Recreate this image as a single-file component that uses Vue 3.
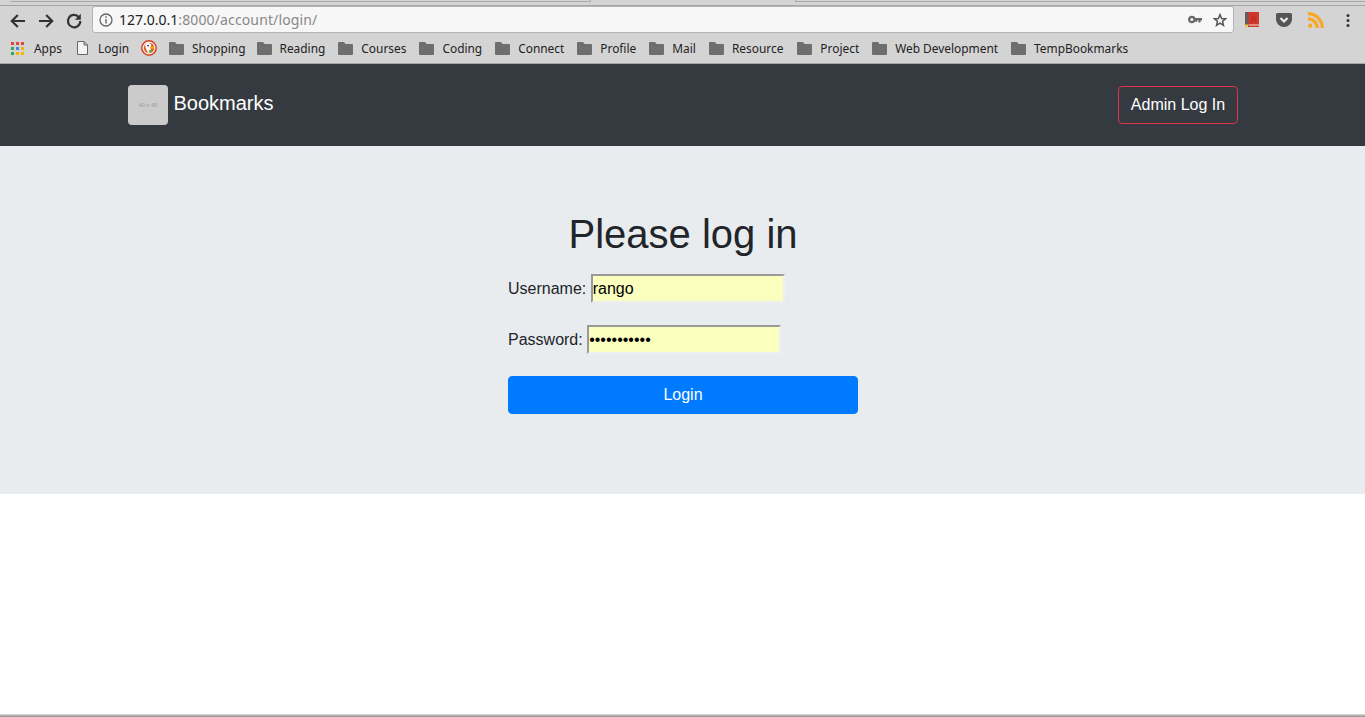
<script setup>
const grid = []
const cols = ['#e8453c','#e8453c','#e8453c','#34a853','#4285f4','#f4b400','#34a853','#f4b400','#f4b400']
for (let r = 0; r < 3; r++) for (let c = 0; c < 3; c++) grid.push({ x: c * 5, y: r * 5, f: cols[r * 3 + c] })
const folders = ['Shopping','Reading','Courses','Coding','Connect','Profile','Mail','Resource','Project','Web Development','TempBookmarks']
</script>

<template>
  <div class="page">
    <header class="chrome">
      <div class="tabs">
        <span class="tab tab-a"></span>
        <span class="tab tab-b"></span>
      </div>
      <div class="toolbar">
        <svg class="nav" width="18" height="18" viewBox="0 0 18 18"><path d="M16 9H3.500M8.800 3 2.800 9 8.800 15" fill="none" stroke="#333" stroke-width="2.200"/></svg>
        <svg class="nav" width="18" height="18" viewBox="0 0 18 18"><path d="M2 9h12.500M9.200 3 15.200 9 9.200 15" fill="none" stroke="#333" stroke-width="2.200"/></svg>
        <svg class="nav" width="18" height="18" viewBox="0 0 18 18"><path d="M14 5.300A6.200 6.200 0 1 0 15.300 9" fill="none" stroke="#333" stroke-width="2.200"/><path d="M15.800 1.800V7.800H9.800Z" fill="#333"/></svg>
        <div class="omnibox">
          <svg width="14" height="14" viewBox="0 0 14 14"><circle cx="7" cy="7" r="6" fill="none" stroke="#666" stroke-width="1.300"/><path d="M6.300 6h1.400v4.500H6.300zM6.300 3.200h1.400v1.500H6.300z" fill="#666"/></svg>
          <span class="url"><span class="host">127.0.0.1</span>:8000/account/login/</span>
          <span class="grow"></span>
          <svg width="14" height="9" viewBox="0 0 14 9"><circle cx="3.800" cy="4.500" r="2.700" fill="none" stroke="#666" stroke-width="2.200"/><path d="M6 3h8v2.500h-1.500V7.500H10.500V5.500H9V7H7.500V5.500H6Z" fill="#666"/></svg>
          <svg class="star" width="14" height="14" viewBox="0 0 16 16"><path d="M8 1.800 9.800 6.200 14.500 6.500 10.900 9.500 12 14.100 8 11.600 4 14.100 5.100 9.500 1.500 6.500 6.200 6.200Z" fill="none" stroke="#555" stroke-width="1.700"/></svg>
        </div>
        <svg class="ext book" width="14" height="15" viewBox="0 0 14 15"><rect width="14" height="15" fill="#d2372c"/><rect width="3.500" height="15" fill="#6b5a58"/><rect x="3.500" y="12.500" width="10.500" height="1" fill="#f3d9d6"/><rect y="12.500" width="3" height="2.500" fill="#f4c430"/><path d="M6 10.500 8.700 3 11.400 10.500M7 8h3.400" fill="none" stroke="#b52a20" stroke-width="1"/></svg>
        <svg class="ext pocket" width="16" height="14" viewBox="0 0 16 14"><path d="M1.500 0h13A1.500 1.500 0 0 1 16 1.500V6.500a8 7.500 0 0 1-16 0V1.500A1.500 1.500 0 0 1 1.500 0Z" fill="#565656"/><path d="M4.500 5 8 8.500 11.500 5" fill="none" stroke="#eee" stroke-width="2.200"/></svg>
        <svg class="ext rss" width="16" height="16" viewBox="0 0 16 16"><circle cx="2.200" cy="13.800" r="2.200" fill="#f9a825"/><path d="M0 6.800a9.200 9.200 0 0 1 9.200 9.200M0 1.700A14.300 14.300 0 0 1 14.300 16" fill="none" stroke="#f9a825" stroke-width="3.200"/></svg>
        <svg class="menu" width="4" height="13" viewBox="0 0 4 13"><circle cx="2" cy="1.500" r="1.500" fill="#333"/><circle cx="2" cy="6.500" r="1.500" fill="#333"/><circle cx="2" cy="11.500" r="1.500" fill="#333"/></svg>
      </div>
      <nav class="bookmarks">
        <a class="bm">
          <svg width="13" height="13" viewBox="0 0 13 13"><rect v-for="(g, i) in grid" :key="i" :x="g.x" :y="g.y" width="3" height="3" :fill="g.f"/></svg>
          <span class="apps-label">Apps</span>
        </a>
        <a class="bm bm-login">
          <svg width="11" height="14" viewBox="0 0 11 14"><path d="M.5.500h6.500l3.500 3.500v9.500H.5ZM7 .5V4h3.500" fill="#f3f3f3" stroke="#666"/></svg>
          <span>Login</span>
        </a>
        <a class="bm bm-duck">
          <svg width="16" height="16" viewBox="0 0 16 16"><circle cx="8" cy="8" r="7.200" fill="#f6f6f6" stroke="#d8401c" stroke-width="1.500"/><circle cx="8" cy="8" r="5.200" fill="#e8592e"/><path d="M4.500 3.800A4.500 4.500 0 0 1 10 4.200L9.800 9 9.500 13H7C6 10.500 3.700 7.500 4.500 3.800Z" fill="#fff"/><path d="M8.500 7 13 6.500 12.500 8.500 9 9Z" fill="#f6b21b"/><path d="M7.500 10.500 11 9.500 10.500 12 8 12.800Z" fill="#5dae3f"/><circle cx="7" cy="5.600" r=".9" fill="#234"/></svg>
        </a>
        <a v-for="f in folders" :key="f" class="bm" :class="{ tight: f === 'Shopping', loose: f === 'Project' }">
          <svg width="15" height="13" viewBox="0 0 15 13"><path d="M1 0h5l1.500 2H14a1 1 0 0 1 1 1v9a1 1 0 0 1-1 1H1a1 1 0 0 1-1-1V1a1 1 0 0 1 1-1Z" fill="#6e6e6e"/></svg>
          <span>{{ f }}</span>
        </a>
      </nav>
    </header>

    <div class="navbar">
      <div class="container">
        <a class="brand">
          <span class="thumb">40 x 40</span>
          <span class="brand-name">Bookmarks</span>
        </a>
        <button class="admin" type="button">Admin Log In</button>
      </div>
    </div>

    <main class="jumbotron">
      <h1>Please log in</h1>
      <form class="login" @submit.prevent>
        <div class="row">
          <label for="u">Username:</label>
          <input id="u" type="text" value="rango" />
        </div>
        <div class="row">
          <label for="p">Password:</label>
          <input id="p" type="password" value="abcdefghijk" />
        </div>
        <button class="submit" type="submit">Login</button>
      </form>
    </main>

    <div class="rest"></div>
    <div class="edge"></div>
  </div>
</template>

<style>
html, body { margin: 0; padding: 0; background: #fff; overflow: hidden; }
</style>

<style scoped>
.page {
  height: 717px;
  display: flex;
  flex-direction: column;
  font-family: "Liberation Sans", Arial, sans-serif;
  color: #212529;
}
.chrome {
  height: 64px;
  box-sizing: border-box;
  background: #d4d4d4;
  border-bottom: 1px solid #a6a6a6;
  position: relative;
  flex: none;
}
.tabs {
  height: 6px;
  box-sizing: border-box;
  border-bottom: 1px solid #a5a5a5;
  position: relative;
}
.tab {
  position: absolute;
  top: 0;
  height: 1px;
  border-bottom: 1px solid #a8a8a8;
}
.tab-a { left: 10px; width: 580px; border-right: 1px solid #a8a8a8; }
.tab-b { left: 795px; right: 0; border-left: 1px solid #a8a8a8; }
.toolbar {
  height: 27px;
  display: flex;
  align-items: center;
  position: relative;
}
.nav { flex: none; margin-left: 10px; margin-top: 2px; }
.nav:first-child { margin-left: 9px; }
.omnibox {
  flex: none;
  margin-left: 9px;
  width: 1142px;
  height: 27px;
  box-sizing: border-box;
  background: #f7f7f7;
  border: 1px solid #b4b4b4;
  border-radius: 3px;
  display: flex;
  align-items: center;
  padding: 0 6px 0 6px;
}
.url {
  font-family: "Noto Sans", sans-serif;
  font-size: 14px;
  color: #888;
  margin-left: 6px;
  letter-spacing: 0.13px;
}
.host { color: #222; letter-spacing: 0; }
.grow { flex: 1; }
.star { margin-left: 11px; }
.ext { flex: none; }
.book { margin-left: 11px; }
.pocket { margin-left: 17px; margin-top: 1px; }
.rss { margin-left: 16px; }
.menu { flex: none; margin-left: 22px; margin-top: 1px; }
.bookmarks {
  position: relative;
  height: 28px;
  box-sizing: border-box;
  padding: 2px 0 0 11px;
  display: flex;
  align-items: center;
  gap: 13px;
  font-family: "Noto Sans", sans-serif;
  font-size: 11.9px;
  color: #222;
}
.bm {
  display: flex;
  align-items: center;
  gap: 8px;
  white-space: nowrap;
  flex: none;
}
.apps-label { margin-left: 2px; }
.bm-login { margin-left: 2px; gap: 10px; }
.bm-duck { margin-left: -1px; margin-right: -1px; }
.tight { margin-right: -2px; }
.loose { margin-left: 1px; }
.navbar {
  flex: none;
  height: 82px;
  background: #343a40;
  display: flex;
  align-items: center;
  padding-left: 1px;
}
.container {
  width: 1110px;
  margin: 0 auto;
  display: flex;
  align-items: center;
  justify-content: space-between;
}
.brand { display: flex; align-items: center; gap: 5.500px; color: #fff; }
.thumb {
  width: 40px;
  height: 40px;
  background: #cbcbcb;
  border-radius: 4px;
  color: #9a9a9a;
  font-size: 5.600px;
  display: flex;
  align-items: center;
  justify-content: center;
}
.brand-name { font-size: 20px; line-height: 30px; position: relative; top: -2px; }
.admin {
  width: 120px;
  height: 38px;
  box-sizing: border-box;
  background: transparent;
  border: 1px solid #dc3545;
  border-radius: 4px;
  color: #fff;
  font: 16px/24px "Liberation Sans", Arial, sans-serif;
  padding: 0;
}
.jumbotron {
  flex: none;
  height: 348px;
  box-sizing: border-box;
  background: #e9ecef;
  padding: 64px 0 0 1px;
}
h1 {
  margin: 0;
  font-size: 40px;
  font-weight: 400;
  line-height: 48px;
  text-align: center;
  color: #212529;
}
.login {
  width: 350px;
  margin: 16px auto 0;
  display: flex;
  flex-direction: column;
  gap: 22px;
}
.row {
  display: flex;
  align-items: center;
  height: 29px;
  gap: 4.450px;
  font-size: 16px;
}
input {
  width: 194px;
  height: 29px;
  box-sizing: border-box;
  border: 2px solid;
  border-color: #9a9a9a #eeeeee #eeeeee #9a9a9a;
  padding: 1px 0;
  background: #faffbd;
  color: #000;
  font: 16px "Liberation Sans", Arial, sans-serif;
  outline: none;
}
.submit {
  height: 38px;
  background: #007bff;
  border: 1px solid #007bff;
  border-radius: 4px;
  color: #fff;
  font: 16px/24px "Liberation Sans", Arial, sans-serif;
  padding: 0;
}
.rest { flex: 1; background: #fff; }
.edge {
  flex: none;
  height: 3px;
  background: linear-gradient(#e0e0e0, #8a8a8a);
}
</style>
